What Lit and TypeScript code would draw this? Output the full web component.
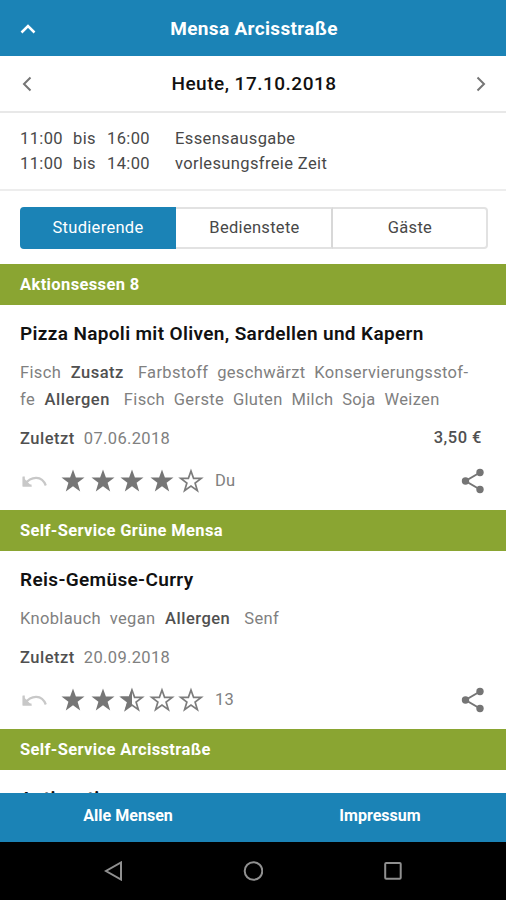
import { LitElement, html, css, svg } from "lit";
import { customElement, property } from "lit/decorators.js";

const STAR = "M12 .4l2.9 8.2h8.6l-6.9 5.200 2.600 8.600L12 17.300l-7.200 5.100 2.600-8.600L.5 8.600h8.600z";

type Part = { text: string; kind?: "label" };
interface Meal {
  name: string;
  rows: Part[][];
  last: string;
  price?: string;
  stars: number;
  note: string;
}

@customElement("star-icon")
class StarIcon extends LitElement {
  @property({ type: Number }) fill = 0;
  static styles = css`
    :host { display: block; width: 29.6px; height: 24px; }
    svg { display: block; width: 24px; height: 24px; overflow: visible; }
    .solid { fill: #767676; }
    .line { fill: none; stroke: #7c7c7c; stroke-width: 1.9; stroke-linejoin: miter; }
  `;
  render() {
    const outline = svg`<path class="line" transform="translate(1.300 1.700) scale(.89)" d=${STAR}></path>`;
    return html`<svg viewBox="0 0 24 24">
      ${this.fill === 1
        ? svg`<path class="solid" d=${STAR}></path>`
        : this.fill === 0
          ? outline
          : svg`${outline}<path class="solid" d="M12 .4V17.300l-7.200 5.100 2.600-8.600L.5 8.600h8.600z"></path>`}
    </svg>`;
  }
}

@customElement("meal-card")
class MealCard extends LitElement {
  @property({ attribute: false }) meal!: Meal;
  static styles = css`
    :host { display: block; padding: 15px 20px 0; color: #808080; white-space: nowrap; }
    .name { font-size: 19px; line-height: 27px; font-weight: 600; color: #111; letter-spacing: .35px; }
    .info { margin-top: 12px; font-size: 16.5px; line-height: 27px; letter-spacing: .35px; }
    .row { display: flex; }
    .row span { margin-right: 8.8px; }
    .row .label { margin: 0 14px 0 .8px; letter-spacing: .5px; }
    .label { font-weight: 500; color: #505050; }
    .meta { display: flex; justify-content: space-between; margin-top: 12px; padding-right: 4px;
      font-size: 16.5px; line-height: 27px; letter-spacing: .35px; }
    .meta .label { margin-right: 9px; letter-spacing: .5px; }
    .price { color: #505050; font-weight: 500; letter-spacing: .5px; line-height: 25px; }
    .actions { display: flex; align-items: center; height: 28px; margin-top: 15px; }
    .undo { width: 26px; height: 14px; margin: 0 13px 0 2px; flex: none; }
    .note { font-size: 16.5px; margin-left: 6px; letter-spacing: .2px; margin-top: -2px; }
    .share { width: 24px; height: 26px; margin-left: auto; margin-right: 1px; }
  `;
  render() {
    const m = this.meal;
    return html`
      <div class="name">${m.name}</div>
      ${m.rows.length ? html`<div class="info">
        ${m.rows.map(r => html`<div class="row">${r.map(p => html`<span class=${p.kind ?? ""}>${p.text}</span>`)}</div>`)}
      </div>
      <div class="meta"><div><span class="label">Zuletzt</span>${m.last}</div><div class="price">${m.price ?? ""}</div></div>
      <div class="actions">
        <svg class="undo" viewBox="0 0 26 14"><path d="M1.700 2.500V11.500H9.500M2.500 10.500C9.500 1.500 20 1.500 23.800 11.500" fill="none" stroke="#c8c8c8" stroke-width="2.200"/><path d="M.7 3V12.500H10z" fill="#c8c8c8"/></svg>
        ${[0, 1, 2, 3, 4].map(i => html`<star-icon .fill=${Math.max(0, Math.min(1, m.stars - i))}></star-icon>`)}
        <span class="note">${m.note}</span>
        <svg class="share" viewBox="0 0 24 26"><g fill="#757575"><circle cx="4.500" cy="13" r="3.700"/><circle cx="19" cy="4.500" r="3.700"/><circle cx="19" cy="21.500" r="3.700"/></g><path d="M19 4.500L4.500 13 19 21.500" fill="none" stroke="#757575" stroke-width="2"/></svg>
      </div>` : ""}`;
  }
}

@customElement("app-root")
class AppRoot extends LitElement {
  static styles = css`
    :host { display: flex; flex-direction: column; height: 900px; overflow: hidden; background: #fff;
      font-family: Roboto, "Liberation Sans", sans-serif; white-space: nowrap; }
    .top { display: grid; grid-template-columns: 60px 1fr 60px; align-items: center; height: 56px;
      background: #1b83b6; color: #fff; flex: none; }
    .title { text-align: center; font-size: 19px; font-weight: 700; letter-spacing: .35px; padding-left: 2px; }
    .top svg { margin: 2px 0 0 20px; }
    .day { display: grid; grid-template-columns: 60px 1fr 60px; align-items: center; height: 57px;
      border-bottom: 2px solid #e8e8e8; box-sizing: border-box; flex: none; }
    .day .prev { margin-left: 22px; }
    .day .next { justify-self: end; margin-right: 20px; }
    .date { text-align: center; font-size: 19px; font-weight: 500; color: #111; letter-spacing: .5px; padding-left: 2px; }
    .hours { height: 78px; flex: none; box-sizing: border-box; padding: 13px 20px 0; border-bottom: 2px solid #ededed;
      font-size: 16.5px; line-height: 25px; color: #484848; letter-spacing: .37px; }
    .slot { display: grid; grid-template-columns: 53px 34px 68px 1fr; }
    .tabs { display: grid; grid-template-columns: 156px 157px 155px; height: 42px; margin: 16px 18px 15px 20px;
      flex: none; line-height: 38px; text-align: center; font-size: 16.5px; letter-spacing: .3px; color: #484848; }
    .tab { border: 2px solid #e2e2e2; box-sizing: border-box; }
    .tab:first-child { background: #1b83b6; border-color: #1b83b6; color: #fff; border-radius: 4px 0 0 4px; }
    .tab:nth-child(2) { border-left: 0; border-right-color: #d8d8d8; padding-left: 2px; }
    .tab:last-child { border-left: 0; border-radius: 0 4px 4px 0; padding-left: 1px; }
    .list { flex: 1; min-height: 0; overflow: hidden; }
    .section { height: 41px; line-height: 41px; padding-left: 20px; background: #8aa532; color: #fff;
      font-size: 16.5px; font-weight: 700; letter-spacing: .37px; }
    .first { height: 205px; }
    .second { height: 178px; }
    meal-card { box-sizing: border-box; }
    .bottom { display: grid; grid-template-columns: 1fr 1fr; height: 49px; line-height: 46px; background: #1b83b6;
      color: #fff; text-align: center; font-size: 16px; font-weight: 700; letter-spacing: .03px; flex: none; padding-left: 2px; }
    .nav { display: flex; align-items: center; justify-content: space-between; height: 58px; box-sizing: border-box;
      background: #000; padding: 0 103px 0 104px; flex: none; }
    .line { fill: none; stroke: #909090; stroke-width: 2; }
  `;
  private sections: { title: string; cls: string; meal: Meal }[] = [
    { title: "Aktionsessen 8", cls: "first", meal: {
      name: "Pizza Napoli mit Oliven, Sardellen und Kapern",
      rows: [
        [{ text: "Fisch" }, { text: "Zusatz", kind: "label" }, { text: "Farbstoff" }, { text: "geschwärzt" }, { text: "Konservierungsstof-" }],
        [{ text: "fe" }, { text: "Allergen", kind: "label" }, { text: "Fisch" }, { text: "Gerste" }, { text: "Gluten" }, { text: "Milch" }, { text: "Soja" }, { text: "Weizen" }],
      ],
      last: "07.06.2018", price: "3,50 €", stars: 4, note: "Du" } },
    { title: "Self-Service Grüne Mensa", cls: "second", meal: {
      name: "Reis-Gemüse-Curry",
      rows: [[{ text: "Knoblauch" }, { text: "vegan" }, { text: "Allergen", kind: "label" }, { text: "Senf" }]],
      last: "20.09.2018", stars: 2.5, note: "13" } },
    { title: "Self-Service Arcisstraße", cls: "third", meal: { name: "Antipasti", rows: [], last: "", stars: 0, note: "" } },
  ];
  render() {
    return html`
      <div class="top">
        <svg width="16" height="10" viewBox="0 0 16 10"><path d="M1.500 8.500L8 2l6.500 6.500" fill="none" stroke="#fff" stroke-width="2.500"/></svg>
        <div class="title">Mensa Arcisstraße</div>
      </div>
      <div class="day">
        <svg class="prev" width="10" height="16" viewBox="0 0 10 16"><path d="M8.500 1.500L2 8l6.500 6.500" fill="none" stroke="#757575" stroke-width="2"/></svg>
        <div class="date">Heute, 17.10.2018</div>
        <svg class="next" width="10" height="16" viewBox="0 0 10 16"><path d="M1.500 1.500L8 8l-6.500 6.500" fill="none" stroke="#757575" stroke-width="2"/></svg>
      </div>
      <div class="hours">
        <div class="slot"><span>11:00</span><span>bis</span><span>16:00</span><span>Essensausgabe</span></div>
        <div class="slot"><span>11:00</span><span>bis</span><span>14:00</span><span>vorlesungsfreie Zeit</span></div>
      </div>
      <div class="tabs"><div class="tab">Studierende</div><div class="tab">Bedienstete</div><div class="tab">Gäste</div></div>
      <div class="list">
        ${this.sections.map(s => html`<div class="section">${s.title}</div><meal-card class=${s.cls} .meal=${s.meal}></meal-card>`)}
      </div>
      <div class="bottom"><span>Alle Mensen</span><span>Impressum</span></div>
      <div class="nav">
        <svg class="line" width="19" height="20" viewBox="0 0 19 20"><path d="M17 1.500v17L2 10z"/></svg>
        <svg class="line" width="20" height="20" viewBox="0 0 20 20"><circle cx="10.500" cy="10" r="8.800"/></svg>
        <svg class="line" width="20" height="20" viewBox="0 0 20 20"><rect x="2.200" y="2" width="15.500" height="15.800" rx="1"/></svg>
      </div>`;
  }
}
